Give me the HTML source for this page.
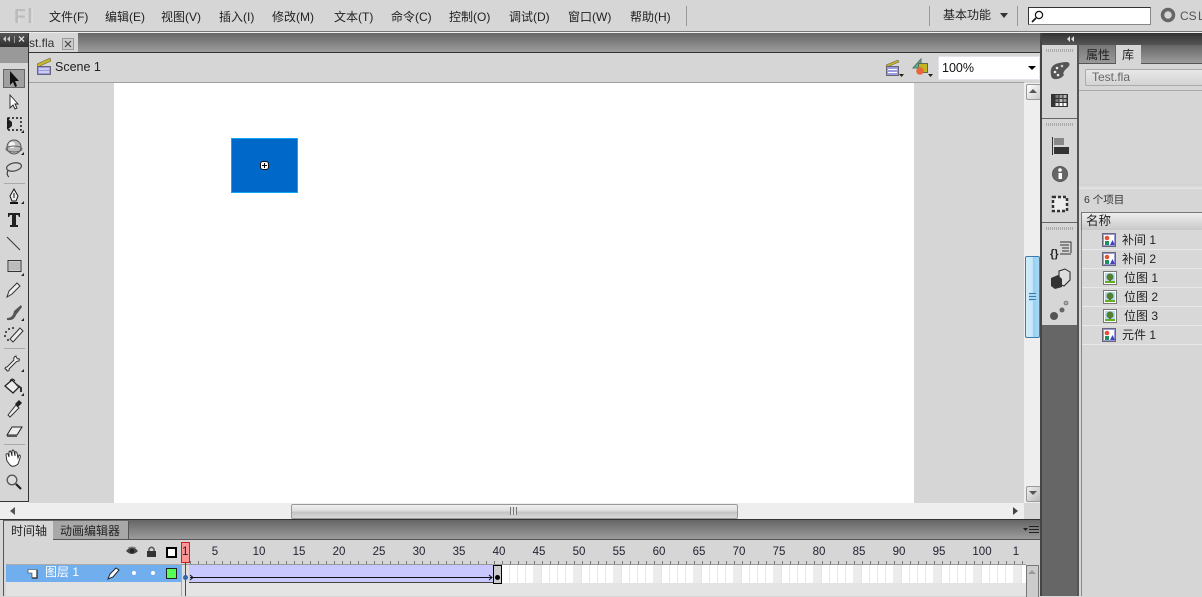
<!DOCTYPE html>
<html><head><meta charset="utf-8"><style>
html,body{margin:0;padding:0}
body{width:1202px;height:596px;position:relative;overflow:hidden;background:#d6d6d6;font:12px "Liberation Sans","Noto Sans CJK SC",sans-serif;color:#222}
.a{position:absolute}
.t{position:absolute;white-space:nowrap;line-height:14px}
svg{position:absolute;overflow:visible}
.m{top:10px}
.r{position:absolute;top:546px;width:30px;text-align:center;font-size:11.5px;line-height:13px;color:#223}
.row{position:absolute;left:1082px;width:120px;height:18px;border-bottom:1px solid #e8e8e8}
</style></head><body>
<!-- menu bar -->
<div class="a" style="left:0;top:0;width:1202px;height:31px;background:#d6d6d6"></div>
<div class="a" style="left:0;top:31px;width:1202px;height:1px;background:#777"></div>
<div class="a" style="left:0;top:32px;width:1202px;height:1px;background:#f0f0f0"></div>
<div class="t" style="left:14px;top:7px;font:bold 20px 'Liberation Sans',sans-serif;line-height:20px;color:#bcbcbc;letter-spacing:1px;text-shadow:1px 0 0 #e8e8e8">Fl</div>
<div class="t m" style="left:49px">文件(F)</div>
<div class="t m" style="left:105px">编辑(E)</div>
<div class="t m" style="left:161px">视图(V)</div>
<div class="t m" style="left:219px">插入(I)</div>
<div class="t m" style="left:272px">修改(M)</div>
<div class="t m" style="left:334px">文本(T)</div>
<div class="t m" style="left:391px">命令(C)</div>
<div class="t m" style="left:449px">控制(O)</div>
<div class="t m" style="left:509px">调试(D)</div>
<div class="t m" style="left:568px">窗口(W)</div>
<div class="t m" style="left:630px">帮助(H)</div>
<div class="a" style="left:686px;top:6px;width:1px;height:20px;background:#999"></div>
<div class="a" style="left:929px;top:6px;width:1px;height:20px;background:#999"></div>
<div class="t" style="left:943px;top:8px;font-size:12px">基本功能</div>
<svg style="left:1000px;top:13px" width="9" height="6"><path d="M0 0H8L4 5Z" fill="#333"/></svg>
<div class="a" style="left:1017px;top:6px;width:1px;height:20px;background:#999"></div>
<div class="a" style="left:1028px;top:7px;width:121px;height:16px;background:#fff;border:1px solid #555;border-color:#333 #888 #888 #333"></div>
<svg style="left:1031px;top:10px" width="14" height="13" fill="none" stroke="#111"><circle cx="8" cy="5" r="3.6" stroke-width="1.2"/><path d="M5 8L1 12" stroke-width="1.6"/></svg>
<svg style="left:1160px;top:7px" width="16" height="16" fill="none"><circle cx="8" cy="8" r="5.500" stroke="#666" stroke-width="3.500"/></svg>
<div class="t" style="left:1180px;top:9px;color:#555;font-size:12px;word-spacing:-2px">CS L</div>

<!-- doc tab bar -->
<div class="a" style="left:0;top:33px;width:1041px;height:19px;background:linear-gradient(#666,#9c9c9c)"></div>
<div class="a" style="left:0;top:52px;width:1041px;height:1px;background:#333"></div>
<div class="a" style="left:28px;top:33px;width:50px;height:19px;background:#d6d6d6"></div>
<div class="t" style="left:29px;top:36px;color:#333">st.fla</div>
<div class="a" style="left:62px;top:38px;width:10px;height:10px;border:1px solid #999;background:#ccc"></div>
<svg style="left:63px;top:39px" width="9" height="9" stroke="#444" stroke-width="1.2"><path d="M2 2L8 8M8 2L2 8"/></svg>

<!-- scene bar -->
<div class="a" style="left:0;top:53px;width:1041px;height:29px;background:#d6d6d6"></div>
<div class="a" style="left:29px;top:82px;width:995px;height:1px;background:#a0a0a0"></div>
<svg style="left:36px;top:58px" width="16" height="17"><path d="M1 6L14 0L15 3L2 9Z" fill="#c8b428" stroke="#554" stroke-width=".5"/><rect x="1.500" y="8.500" width="13" height="8" fill="#9a9ae0" stroke="#667"/><path d="M3 11H13M3 14H13" stroke="#fff"/></svg>
<div class="t" style="left:55px;top:60px;font-size:12.500px;color:#222">Scene 1</div>
<svg style="left:885px;top:59px" width="20" height="19"><path d="M1 6L13 1L14 3L2 8Z" fill="#c8b428" stroke="#554" stroke-width=".5"/><rect x="1.500" y="7.500" width="12" height="9" fill="#9a9ae0" stroke="#667"/><path d="M3 10.500H12M3 13.500H12" stroke="#fff"/><path d="M14 15H19L16.500 18Z" fill="#221"/></svg>
<svg style="left:912px;top:58px" width="22" height="20"><path d="M1 10L9 1V10Z" fill="#4cb8a0" stroke="#576"/><rect x="6.500" y="5.500" width="9" height="9" fill="#c0b420" stroke="#665"/><circle cx="8" cy="13" r="3.800" fill="#e8683c"/><path d="M16 16H21L18.500 19Z" fill="#221"/></svg>
<div class="a" style="left:938px;top:56px;width:102px;height:24px;background:#fff;border:1px solid #e4e4ec;box-sizing:border-box"></div>
<div class="t" style="left:942px;top:61px;font-size:12.500px;color:#111">100%</div>
<svg style="left:1028px;top:66px" width="9" height="5"><path d="M0 0H8L4 4Z" fill="#000"/></svg>

<!-- stage -->
<div class="a" style="left:29px;top:83px;width:995px;height:420px;background:#d6d6d6"></div>
<div class="a" style="left:114px;top:83px;width:800px;height:420px;background:#fff"></div>
<div class="a" style="left:231px;top:138px;width:65px;height:53px;background:#0068c8;border:1px solid #10a4f4"></div>
<div class="a" style="left:260px;top:161px;width:7px;height:7px;background:#f4f4f4;border:1px solid #111;border-radius:3px"></div>
<svg style="left:260px;top:161px" width="9" height="9" stroke="#000"><path d="M2 4.500H7M4.500 2V7"/></svg>

<!-- v scrollbar -->
<div class="a" style="left:1024px;top:83px;width:16px;height:420px;background:#eee"></div>
<div class="a" style="left:1026px;top:84px;width:13px;height:14px;background:linear-gradient(135deg,#fff,#ccc);border:1px solid #999;border-radius:2px"></div>
<svg style="left:1029px;top:89px" width="9" height="5"><path d="M0 4H8L4 0Z" fill="#555"/></svg>
<div class="a" style="left:1025px;top:256px;width:13px;height:80px;background:linear-gradient(90deg,#d0ecfc 0,#c8e8fa 50%,#98d0f0 55%,#a8d8f4 100%);border:1px solid #3c7cac;border-radius:2px"></div>
<div class="a" style="left:1029px;top:293px;width:7px;height:8px;background:repeating-linear-gradient(#3a7ca8 0,#3a7ca8 1px,#a8d8f4 1px,#a8d8f4 3px)"></div>
<div class="a" style="left:1026px;top:486px;width:13px;height:14px;background:linear-gradient(135deg,#eee,#bbb);border:1px solid #999;border-radius:2px"></div>
<svg style="left:1029px;top:491px" width="9" height="5"><path d="M0 0H8L4 4Z" fill="#555"/></svg>

<!-- h scrollbar -->
<div class="a" style="left:29px;top:503px;width:995px;height:16px;background:#eee"></div>
<svg style="left:1013px;top:507px" width="6" height="9"><path d="M0 0V8L5 4Z" fill="#444"/></svg>
<div class="a" style="left:0;top:502px;width:29px;height:18px;background:#eee"></div>
<svg style="left:10px;top:507px" width="6" height="9"><path d="M5 0V8L0 4Z" fill="#555"/></svg>
<div class="a" style="left:291px;top:504px;width:445px;height:13px;background:linear-gradient(#f0f0f0,#ddd 45%,#c4c4c4 55%,#d8d8d8);border:1px solid #999;border-radius:2px"></div>
<div class="a" style="left:510px;top:507px;width:7px;height:8px;background:repeating-linear-gradient(90deg,#777 0,#777 1px,#ddd 1px,#ddd 3px)"></div>
<div class="a" style="left:0;top:519px;width:1041px;height:1px;background:#333"></div>

<!-- timeline tabs -->
<div class="a" style="left:0;top:520px;width:1041px;height:19px;background:linear-gradient(#666,#9c9c9c)"></div>
<div class="a" style="left:0;top:539px;width:1041px;height:57px;background:#d6d6d6"></div>
<div class="a" style="left:0;top:539px;width:1041px;height:1px;background:#555"></div>
<div class="a" style="left:4px;top:521px;width:49px;height:19px;background:#d6d6d6"></div>
<div class="a" style="left:53px;top:521px;width:75px;height:18px;background:#a8a8a8;border-right:1px solid #555"></div>
<div class="t" style="left:11px;top:524px;color:#222">时间轴</div>
<div class="t" style="left:60px;top:524px;color:#222">动画编辑器</div>
<svg style="left:1023px;top:526px" width="17" height="9"><path d="M0 2H5L2.500 5Z" fill="#222"/><path d="M6 .5H16M6 3.500H16M6 6.500H16" stroke="#222"/></svg>
<div class="a" style="left:0;top:520px;width:3px;height:76px;background:#d6d6d6;border-right:1px solid #555"></div>

<!-- layer header icons -->
<svg style="left:126px;top:546px" width="13" height="11"><path d="M0 5Q6 -2 12 5Q6 11 0 5Z" fill="#444"/><circle cx="6" cy="5" r="2" fill="#222"/><path d="M2 2Q6 0 10 2" stroke="#888" fill="none"/></svg>
<svg style="left:146px;top:546px" width="11" height="12"><path d="M3 5V3Q5.500 -.5 8 3V5" fill="none" stroke="#555" stroke-width="1.500"/><rect x="1" y="5" width="9" height="6" fill="#333"/></svg>
<div class="a" style="left:166px;top:547px;width:7px;height:7px;border:2px solid #000;background:#fff"></div>

<!-- ruler -->
<div class="a" style="left:6px;top:564px;width:175px;height:1px;background:#aaa"></div>
<div class="a" style="left:181px;top:564px;width:845px;height:1px;background:#999"></div>
<div class="a" style="left:190px;top:561px;width:836px;height:3px;background:repeating-linear-gradient(90deg,#777 0,#777 1px,transparent 1px,transparent 8px)"></div>
<div class="r" style="left:200px">5</div><div class="r" style="left:244px">10</div><div class="r" style="left:284px">15</div><div class="r" style="left:324px">20</div><div class="r" style="left:364px">25</div><div class="r" style="left:404px">30</div><div class="r" style="left:444px">35</div><div class="r" style="left:484px">40</div><div class="r" style="left:524px">45</div><div class="r" style="left:564px">50</div><div class="r" style="left:604px">55</div><div class="r" style="left:644px">60</div><div class="r" style="left:684px">65</div><div class="r" style="left:724px">70</div><div class="r" style="left:764px">75</div><div class="r" style="left:804px">80</div><div class="r" style="left:844px">85</div><div class="r" style="left:884px">90</div><div class="r" style="left:924px">95</div><div class="r" style="left:967px">100</div><div class="r" style="left:1001px">1</div>

<!-- layer row -->
<div class="a" style="left:6px;top:565px;width:175px;height:17px;background:#70aeee"></div>
<div class="a" style="left:6px;top:582px;width:175px;height:14px;background:#e2e2e2"></div>
<div class="a" style="left:181px;top:565px;width:845px;height:31px;background:#e4e4e4"></div>
<div class="a" style="left:181px;top:565px;width:1px;height:31px;background:#aaa"></div>
<svg style="left:28px;top:569px" width="11" height="10"><path d="M0 .500H9V9H4V4H0Z" fill="#fff" stroke="#333" stroke-width=".6"/><path d="M9 1V9H4" fill="none" stroke="#222" stroke-width="1.200"/></svg>
<div class="t" style="left:45px;top:565px;color:#fff;font-size:12px">图层 1</div>
<svg style="left:107px;top:567px" width="13" height="13"><path d="M1 12L3 7L9 1L12 3L6 10Z" fill="#fff" stroke="#222"/></svg>
<div class="a" style="left:132px;top:571px;width:4px;height:4px;background:#fff;border-radius:2px"></div>
<div class="a" style="left:151px;top:571px;width:4px;height:4px;background:#fff;border-radius:2px"></div>
<div class="a" style="left:166px;top:568px;width:9px;height:9px;background:#55ff55;border:1px solid #222"></div>

<!-- frames -->
<div class="a" style="left:182px;top:565px;width:7px;height:17px;background:#ddd"></div>
<div class="a" style="left:189px;top:565px;width:304px;height:17px;background:#c8c8ff;border-bottom:1px solid #444"></div>
<div class="a" style="left:502px;top:565px;width:524px;height:18px;background:repeating-linear-gradient(90deg,#fff 0,#fff 7px,#e6e6e6 7px,#e6e6e6 8px)"></div>
<div class="a" style="left:533px;top:565px;width:493px;height:18px;background:repeating-linear-gradient(90deg,#ececec 0,#ececec 8px,transparent 8px,transparent 40px)"></div>
<svg style="left:189px;top:572px" width="305" height="9" fill="none" stroke="#111"><path d="M1 5.500H303"/><path d="M1 3L4 5.500L1 8"/><path d="M300 3L303 5.500L300 8"/></svg>
<div class="a" style="left:493px;top:565px;width:7px;height:17px;background:#ccc;border:1px solid #000"></div>
<div class="a" style="left:495px;top:575px;width:5px;height:5px;background:#000;border-radius:3px"></div>
<div class="a" style="left:181px;top:542px;width:7px;height:19px;background:#ff9494;border:1px solid #cc2020"></div>
<div class="t" style="left:182px;top:546px;font-size:11.500px;line-height:13px;color:#223">1</div>
<div class="a" style="left:185px;top:562px;width:1px;height:34px;background:#c01818"></div>
<div class="a" style="left:183px;top:575px;width:5px;height:5px;background:#2c66b0;border-radius:3px"></div>

<!-- timeline v scroll -->
<div class="a" style="left:1026px;top:565px;width:11px;height:31px;background:#ccc;border:1px solid #777;border-bottom:0"></div>
<svg style="left:1028px;top:570px" width="9" height="5"><path d="M0 4H8L4 0Z" fill="#999"/></svg>

<!-- toolbox -->
<div class="a" style="left:0;top:33px;width:28px;height:13px;background:linear-gradient(#555,#333)"></div>
<div class="a" style="left:0;top:46px;width:28px;height:17px;background:#999;border-top:1px solid #333;box-sizing:border-box"></div>
<div class="a" style="left:0;top:63px;width:28px;height:438px;background:#d6d6d6"></div>
<div class="a" style="left:28px;top:33px;width:1px;height:469px;background:#333"></div>
<div class="a" style="left:0;top:501px;width:29px;height:1px;background:#333"></div>
<svg style="left:3px;top:36px" width="24" height="8" fill="#ccc"><path d="M3 0V6L0 3ZM7 0V6L4 3Z"/><rect x="11" y="0" width="1" height="7" fill="#999"/><path d="M16 .5L21 5.500M21 .5L16 5.500" stroke="#ddd" stroke-width="1.300"/></svg>
<div class="a" style="left:3px;top:69px;width:20px;height:17px;background:#a0a0a0;border:1px solid #666"></div>
<svg style="left:0;top:63px" width="28" height="438">
<path d="M10 8L10 22L13 19L15 24L17 23L15 18L19 18Z" fill="#111"/>
<path d="M10 32L10 45L13 42L15 46L17 45L15 41L18 41Z" fill="#fff" stroke="#222" stroke-width=".9"/>
<path d="M7 55V67L12 63V59Z" fill="#222"/><rect x="8" y="55" width="13" height="12" fill="none" stroke="#111" stroke-dasharray="2 2" stroke-width="1.400"/><path d="M21 70H24V67Z" fill="#222"/>
<circle cx="14" cy="84" r="7" fill="#bbb" stroke="#555"/><circle cx="12" cy="82" r="3.200" fill="#f4f4f4"/><ellipse cx="14" cy="86" rx="8" ry="3" fill="none" stroke="#666"/><path d="M21 92H24V89Z" fill="#222"/>
<ellipse cx="14" cy="104" rx="7.500" ry="4" transform="rotate(-12 14 104)" fill="none" stroke="#444" stroke-width="1.200"/><path d="M8 107Q6 112 9 114" fill="none" stroke="#444" stroke-width="1.200"/>
<rect x="4" y="120" width="21" height="1" fill="#aaa"/>
<path d="M14 126L18 133L16 138H12L10 133Z" fill="#eee" stroke="#111"/><path d="M14 130V135" stroke="#111"/><path d="M10 140H18" stroke="#111" stroke-width="2"/><path d="M21 141H24V138Z" fill="#222"/>
<path d="M8 150H20V154H19L18 152H16V162H18V164H10V162H12V152H10L9 154H8Z" fill="#222"/>
<path d="M7 174L20 187" stroke="#333" stroke-width="1"/>
<rect x="8" y="197.500" width="13" height="11" fill="#ddd" stroke="#333"/><rect x="9" y="198.500" width="11" height="9" fill="#bbb"/><path d="M21 213H24V210Z" fill="#222"/>
<path d="M7 234L9 228L17 220L20 223L12 231Z" fill="#eee" stroke="#333"/>
<path d="M7 255Q13 255 14 248L21 242L22 244L16 252Q14 258 7 257Z" fill="#555"/><path d="M21 258H24V255Z" fill="#222"/>
<circle cx="6" cy="269" r="1.100" fill="#444"/><circle cx="9" cy="266" r="1.100" fill="#444"/><circle cx="13" cy="265" r="1.100" fill="#444"/><circle cx="5" cy="273" r="1.100" fill="#444"/><circle cx="8" cy="277" r="1.100" fill="#444"/><path d="M10 276L20 265L23 268L13 279Z" fill="#eee" stroke="#333"/>
<rect x="4" y="285" width="21" height="1" fill="#aaa"/>
<path d="M7 304L14 297Q13 294 16 293Q16 295 18 296Q20 295 19 298Q17 298 16 299L9 306Q10 308 7 308Q7 306 5 306Q5 304 7 304Z" fill="#f4f4f4" stroke="#333"/><path d="M21 309H24V306Z" fill="#222"/>
<path d="M5 323L12 317L19 324L13 330Z" fill="#eee" stroke="#222" stroke-width="1.300"/><path d="M10 318Q12 314 15 318" fill="none" stroke="#222"/><path d="M17 322L21 325V329" fill="none" stroke="#333" stroke-width="2"/><path d="M21 333H24V330Z" fill="#222"/>
<path d="M8 352L16 342L19 345L10 354Z" fill="#eee" stroke="#333"/><path d="M15 341L19 337L22 340L18 344Z" fill="#222"/>
<path d="M7 372L12 364H22L17 372Z" fill="#eee" stroke="#222"/><path d="M7 372H17V374H7Z" fill="#555"/>
<rect x="4" y="381" width="21" height="1" fill="#aaa"/>
<path d="M7 398L6 392Q6 390 8 391L9 394V389Q10 387 11 389L12 393V388Q13 386 14 388L15 393V389Q16 388 17 390L18 395L19 392Q21 392 20 395L18 401Q13 405 10 402Z" fill="#fff" stroke="#222" stroke-width=".9"/>
<circle cx="12" cy="417" r="4.800" fill="#ddd" stroke="#555" stroke-width="1.300"/><path d="M16 421L21 426" stroke="#222" stroke-width="2.200"/>
</svg>

<!-- right dock -->
<div class="a" style="left:1040px;top:33px;width:162px;height:12px;background:linear-gradient(#333,#555)"></div>
<svg style="left:1067px;top:36px" width="8" height="7"><path d="M3 0V6L0 3ZM7 0V6L4 3Z" fill="#ddd"/></svg>
<div class="a" style="left:1040px;top:33px;width:2px;height:563px;background:#444"></div>
<div class="a" style="left:1042px;top:45px;width:35px;height:280px;background:#d6d6d6"></div>
<div class="a" style="left:1042px;top:325px;width:35px;height:271px;background:#666"></div>
<div class="a" style="left:1077px;top:45px;width:2px;height:551px;background:#555"></div>
<div class="a" style="left:1042px;top:118px;width:35px;height:1px;background:#666"></div>
<div class="a" style="left:1042px;top:222px;width:35px;height:1px;background:#666"></div>
<div class="a" style="left:1046px;top:49px;width:27px;height:3px;background:repeating-linear-gradient(90deg,#aaa 0,#aaa 1px,transparent 1px,transparent 2px)"></div>
<div class="a" style="left:1046px;top:123px;width:27px;height:3px;background:repeating-linear-gradient(90deg,#aaa 0,#aaa 1px,transparent 1px,transparent 2px)"></div>
<div class="a" style="left:1046px;top:227px;width:27px;height:3px;background:repeating-linear-gradient(90deg,#aaa 0,#aaa 1px,transparent 1px,transparent 2px)"></div>
<svg style="left:1042px;top:45px" width="36" height="280">
<path d="M9 30Q7 20 17 18Q26 16 27 18Q29 20 24 24Q20 28 22 30Q18 35 12 34Q9 33 9 30Z" fill="#555"/><circle cx="13" cy="27" r="1.300" fill="#eee"/><circle cx="15" cy="23" r="1.300" fill="#eee"/><circle cx="20" cy="21" r="1.300" fill="#ccc"/><circle cx="16" cy="30" r="1.300" fill="#eee"/>
<rect x="9" y="49" width="17" height="13" fill="#333"/><rect x="13.500" y="50" width="3" height="3" fill="#777"/><rect x="17.500" y="50" width="3" height="3" fill="#999"/><rect x="21.500" y="50" width="3" height="3" fill="#bbb"/><rect x="13.500" y="54" width="3" height="3" fill="#777"/><rect x="17.500" y="54" width="3" height="3" fill="#bbb"/><rect x="21.500" y="54" width="3" height="3" fill="#999"/><rect x="13.500" y="58" width="3" height="3" fill="#ddd"/><rect x="17.500" y="58" width="3" height="3" fill="#fff"/><rect x="21.500" y="58" width="3" height="3" fill="#fff"/>
<path d="M10.500 92V110" stroke="#333"/><rect x="12" y="93" width="10" height="7" fill="#888"/><rect x="12" y="102" width="15" height="7" fill="#333"/>
<circle cx="18" cy="129" r="8" fill="#555"/><circle cx="18" cy="129" r="7" fill="#666"/><rect x="16.500" y="128" width="3.500" height="6" fill="#fff"/><circle cx="18" cy="125" r="1.800" fill="#fff"/>
<rect x="11" y="152" width="14" height="14" fill="#eee" stroke="#333" stroke-dasharray="3 2" stroke-width="2.500"/>
<text x="8" y="212" font-size="11" font-weight="bold" fill="#222" font-family="Liberation Sans">{}</text>
<path d="M18 197H29V208M18 200H27M20 203H27M20 206H27M18 209H29" fill="none" stroke="#333"/>
<path d="M17 226L23 224L28 227V235L22 241L17 239Z" fill="#ddd" stroke="#222"/><path d="M9 233L16 230L20 234V242L13 244L9 241Z" fill="#333"/>
<circle cx="12" cy="271" r="4" fill="#555"/><circle cx="20" cy="265" r="2.500" fill="#666"/><circle cx="24" cy="258" r="2" fill="#aaa" stroke="#555" stroke-width=".6"/>
</svg>

<!-- right panel -->
<div class="a" style="left:1079px;top:45px;width:123px;height:18px;background:linear-gradient(#666,#9c9c9c)"></div>
<div class="a" style="left:1079px;top:63px;width:123px;height:1px;background:#555"></div>
<div class="a" style="left:1079px;top:45px;width:37px;height:18px;background:linear-gradient(#777,#999);border-right:1px solid #666;box-sizing:border-box"></div>
<div class="a" style="left:1116px;top:45px;width:25px;height:19px;background:#d6d6d6"></div>
<div class="t" style="left:1086px;top:48px;color:#222">属性</div>
<div class="t" style="left:1122px;top:48px;color:#222">库</div>
<div class="a" style="left:1079px;top:64px;width:123px;height:532px;background:#d6d6d6"></div>
<div class="a" style="left:1085px;top:69px;width:120px;height:15px;background:linear-gradient(#e8e8e8,#d4d4d4);border:1px solid #aaa;border-radius:2px"></div>
<div class="t" style="left:1092px;top:70px;color:#666;font-size:12px">Test.fla</div>
<div class="a" style="left:1079px;top:90px;width:123px;height:1px;background:#aaa"></div>
<div class="a" style="left:1079px;top:184px;width:123px;height:5px;background:linear-gradient(#d0d0d0,#e4e4e4)"></div>
<div class="t" style="left:1084px;top:193px;font-size:10.500px;color:#333">6 个项目</div>
<div class="a" style="left:1081px;top:212px;width:121px;height:18px;background:linear-gradient(#eee,#c8c8c8);border-top:1px solid #777;border-left:1px solid #777;box-sizing:border-box"></div>
<div class="t" style="left:1086px;top:214px;color:#222;font-size:12.500px">名称</div>
<div class="a" style="left:1081px;top:230px;width:1px;height:366px;background:#888"></div>
<div class="a" style="left:1082px;top:230px;width:120px;height:114px;background:#d8d8d8"></div>
<div class="row" style="top:231px"></div><div class="row" style="top:250px"></div><div class="row" style="top:269px"></div><div class="row" style="top:288px"></div><div class="row" style="top:307px"></div><div class="row" style="top:326px"></div>
<svg style="left:0;top:0;pointer-events:none" width="1202" height="596">
<defs><g id="s"><rect x=".5" y=".5" width="13" height="13" fill="#fff" stroke="#667" /><rect x="1.500" y="1.500" width="11" height="11" fill="#fff" stroke="#9a9ad8"/><circle cx="5" cy="5" r="2.300" fill="#e85030"/><rect x="3" y="8" width="4" height="4" fill="#209060"/><path d="M8 12L10.500 7L13 12Z" fill="#4040c0"/></g>
<g id="b"><rect x=".5" y=".5" width="13" height="13" fill="#fff" stroke="#777"/><rect x="2" y="2" width="10" height="10" fill="#b8d8f0"/><circle cx="7" cy="6" r="3.500" fill="#508030"/><rect x="6" y="8" width="2" height="2" fill="#664"/><rect x="2" y="10" width="10" height="2" fill="#60b020"/></g></defs>
<use href="#s" x="1102" y="233"/><use href="#s" x="1102" y="252"/><use href="#b" x="1103" y="271"/><use href="#b" x="1103" y="290"/><use href="#b" x="1103" y="309"/><use href="#s" x="1102" y="328"/>
</svg>
<div class="t" style="left:1122px;top:233px;color:#222">补间 1</div>
<div class="t" style="left:1122px;top:252px;color:#222">补间 2</div>
<div class="t" style="left:1124px;top:271px;color:#222">位图 1</div>
<div class="t" style="left:1124px;top:290px;color:#222">位图 2</div>
<div class="t" style="left:1124px;top:309px;color:#222">位图 3</div>
<div class="t" style="left:1122px;top:328px;color:#222">元件 1</div>
</body></html>
